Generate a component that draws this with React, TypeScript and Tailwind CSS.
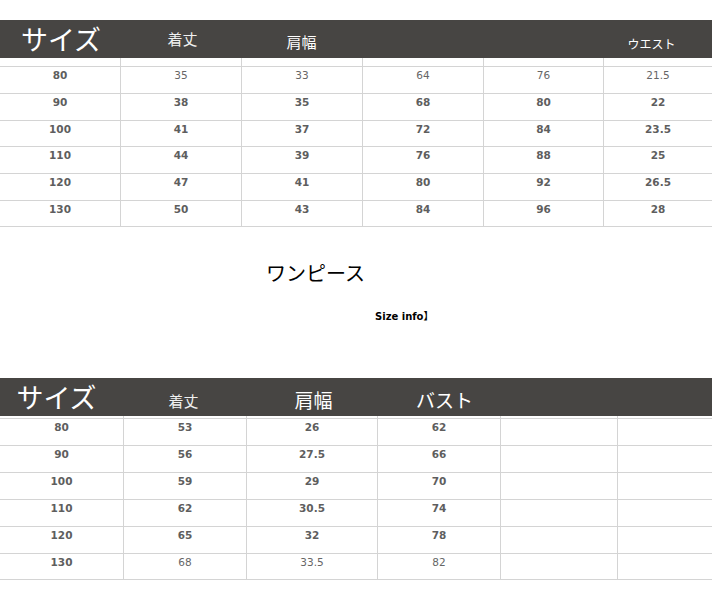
const cjk = "font-['Noto_Sans_CJK_JP','Noto_Sans_CJK_SC',sans-serif]"
const num = "font-['DejaVu_Sans','Verdana',sans-serif]"

type Cell = { v: string; b?: boolean }
type Head = { label: string; cls: string }

interface TableProps {
  grid: string
  heads: Head[]
  gapCls: string
  rows: Cell[][]
  heights: string[]
}

const cellCls = (i: number) => (i === 0 ? '' : 'border-l border-[#d4d4d4]')

const SizeTable = ({ grid, heads, gapCls, rows, heights }: TableProps) => {
  return (
    <div>
      <div className={`grid ${grid} h-[38px] bg-[#474543] text-white ${cjk}`}>
        {heads.map((h, i) => (
          <div key={i} className={`flex justify-center leading-none ${h.cls}`}>
            {h.label}
          </div>
        ))}
      </div>
      <div className={`grid ${grid} ${gapCls}`}>
        {heads.map((_, i) => (
          <div key={i} className={cellCls(i)} />
        ))}
      </div>
      {rows.map((r, ri) => (
        <div
          key={ri}
          className={`grid ${grid} border-t border-[#d4d4d4] ${heights[ri]} ${
            ri === rows.length - 1 ? 'border-b' : ''
          }`}
        >
          {r.map((c, ci) => (
            <div
              key={ci}
              className={`${cellCls(ci)} pt-[1px] text-center text-[10.5px] leading-[14px] ${num} ${
                c.b ? 'font-bold text-[#5e5e5e]' : 'text-[#666]'
              }`}
            >
              {c.v}
            </div>
          ))}
        </div>
      ))}
    </div>
  )
}

const mk = (vals: string[], bold: boolean[] | boolean = true): Cell[] =>
  vals.map((v, i) => ({ v, b: Array.isArray(bold) ? bold[i] : bold }))

const rows1: Cell[][] = [
  mk(['80', '35', '33', '64', '76', '21.5'], [true, false, false, false, false, false]),
  mk(['90', '38', '35', '68', '80', '22']),
  mk(['100', '41', '37', '72', '84', '23.5']),
  mk(['110', '44', '39', '76', '88', '25']),
  mk(['120', '47', '41', '80', '92', '26.5']),
  mk(['130', '50', '43', '84', '96', '28'])
]

const rows2: Cell[][] = [
  mk(['80', '53', '26', '62', '', '']),
  mk(['90', '56', '27.5', '66', '', '']),
  mk(['100', '59', '29', '70', '', '']),
  mk(['110', '62', '30.5', '74', '', '']),
  mk(['120', '65', '32', '78', '', '']),
  mk(['130', '68', '33.5', '82', '', ''], [true, false, false, false, false, false])
]

const heads1: Head[] = [
  { label: 'サイズ', cls: 'pt-[5px] pl-[2px] text-[27px]' },
  { label: '着丈', cls: 'pt-[11px] pl-[4px] text-[15px] text-[#f0f0f0]' },
  { label: '肩幅', cls: 'pt-[14px] text-[15px]' },
  { label: '', cls: '' },
  { label: '', cls: '' },
  { label: 'ウエスト', cls: 'pt-[18px] pr-[12px] text-[12px]' }
]

const heads2: Head[] = [
  { label: 'サイズ', cls: 'pt-[5px] pr-[10px] text-[27px]' },
  { label: '着丈', cls: 'pt-[15px] pr-[2px] text-[15px] text-[#f0f0f0]' },
  { label: '肩幅', cls: 'pt-[12px] pl-[4px] text-[19px]' },
  { label: 'バスト', cls: 'pt-[12px] pl-[12px] text-[19px]' },
  { label: '', cls: '' },
  { label: '', cls: '' }
]

export default function App() {
  return (
    <div className="w-[712px] h-[591px] overflow-hidden bg-white pt-[20px]">
      <SizeTable
        grid="grid-cols-[120px_121px_121px_121px_120px_1fr]"
        heads={heads1}
        gapCls="h-[8px]"
        rows={rows1}
        heights={['h-[27px]', 'h-[27px]', 'h-[26px]', 'h-[27px]', 'h-[27px]', 'h-[27px]']}
      />

      <div className={`mt-[36px] pl-[266px] text-[20px] leading-[20px] text-black ${cjk}`}>
        ワンピース
      </div>
      <div className={`mt-[26px] pl-[375px] text-[10px] leading-[14px] font-bold text-black ${num}`}>
        Size info<span className={cjk}>】</span>
      </div>

      <div className="mt-[54px]">
        <SizeTable
          grid="grid-cols-[123px_123px_131px_123px_117px_1fr]"
          heads={heads2}
          gapCls="h-[2px]"
          rows={rows2}
          heights={['h-[27px]', 'h-[27px]', 'h-[27px]', 'h-[27px]', 'h-[27px]', 'h-[27px]']}
        />
      </div>
    </div>
  )
}
